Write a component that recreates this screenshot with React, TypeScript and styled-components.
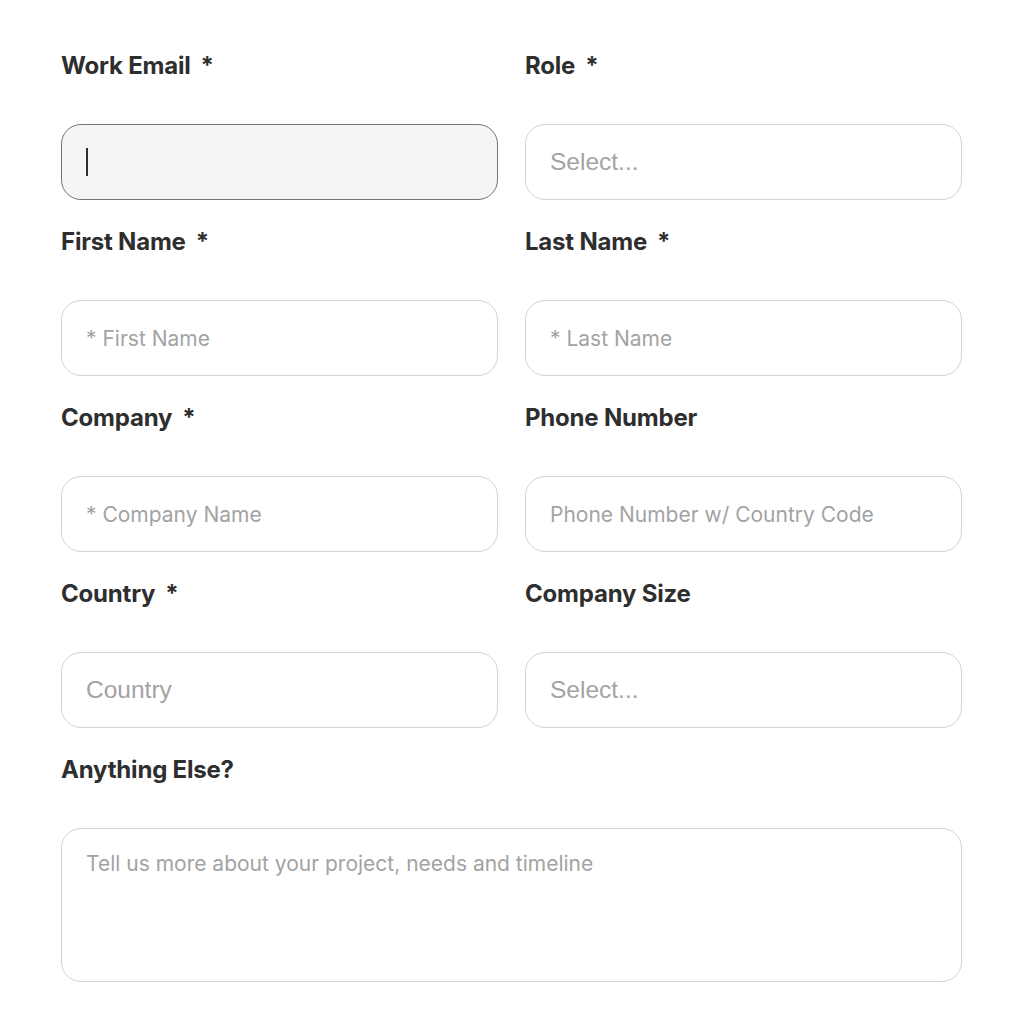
import React from "react";
import styled, { createGlobalStyle } from "styled-components";

const GlobalStyle = createGlobalStyle`
  html, body {
    margin: 0;
    padding: 0;
    background: #ffffff;
  }
`;

const Form = styled.form`
  display: grid;
  grid-template-columns: 437px 437px;
  column-gap: 27px;
  row-gap: 26px;
  padding: 50px 0 0 61px;
`;

const Field = styled.div<{ $wide?: boolean }>`
  display: flex;
  flex-direction: column;
  gap: 42px;
  grid-column: ${(p) => (p.$wide ? "1 / -1" : "auto")};
`;

const Label = styled.label`
  font-family: Inter, "Noto Sans", sans-serif;
  font-weight: 700;
  font-size: 24px;
  line-height: 32px;
  letter-spacing: -0.2px;
  color: #2e2e2e;

  .req {
    margin-left: 10px;
  }
`;

const Input = styled.input<{ $large?: boolean }>`
  box-sizing: border-box;
  width: 100%;
  height: 76px;
  padding: 0 24px;
  border-radius: 20px;
  border: 1.5px solid #d3d3d3;
  background: #ffffff;
  outline: none;
  font-family: ${(p) =>
    p.$large ? `"Liberation Sans", Arial, sans-serif` : `Inter, "Noto Sans", sans-serif`};
  font-size: ${(p) => (p.$large ? "24.5px" : "21px")};
  color: #2e2e2e;

  &::placeholder {
    color: #a3a3a3;
  }
`;

const FocusedBox = styled.div`
  box-sizing: border-box;
  height: 76px;
  padding: 0 24px;
  display: flex;
  align-items: center;
  border-radius: 20px;
  border: 1.5px solid #747474;
  background: #f5f5f5;
`;

const Caret = styled.span`
  display: block;
  width: 2px;
  height: 28px;
  background: #2e2e2e;
`;

const TextArea = styled.textarea`
  box-sizing: border-box;
  width: 100%;
  height: 154px;
  padding: 22px 24px;
  border-radius: 20px;
  border: 1.5px solid #d3d3d3;
  background: #ffffff;
  resize: none;
  outline: none;
  font-family: Inter, "Noto Sans", sans-serif;
  font-size: 21px;
  line-height: 26px;

  &::placeholder {
    color: #a3a3a3;
  }
`;

const Req = () => <span className="req">*</span>;

export default function App() {
  return (
    <>
      <GlobalStyle />
      <Form>
        <Field>
          <Label>
            Work Email<Req />
          </Label>
          <FocusedBox>
            <Caret />
          </FocusedBox>
        </Field>
        <Field>
          <Label>
            Role<Req />
          </Label>
          <Input $large placeholder="Select..." />
        </Field>
        <Field>
          <Label>
            First Name<Req />
          </Label>
          <Input placeholder="* First Name" />
        </Field>
        <Field>
          <Label>
            Last Name<Req />
          </Label>
          <Input placeholder="* Last Name" />
        </Field>
        <Field>
          <Label>
            Company<Req />
          </Label>
          <Input placeholder="* Company Name" />
        </Field>
        <Field>
          <Label>Phone Number</Label>
          <Input placeholder="Phone Number w/ Country Code" />
        </Field>
        <Field>
          <Label>
            Country<Req />
          </Label>
          <Input $large placeholder="Country" />
        </Field>
        <Field>
          <Label>Company Size</Label>
          <Input $large placeholder="Select..." />
        </Field>
        <Field $wide>
          <Label>Anything Else?</Label>
          <TextArea placeholder="Tell us more about your project, needs and timeline" />
        </Field>
      </Form>
    </>
  );
}
